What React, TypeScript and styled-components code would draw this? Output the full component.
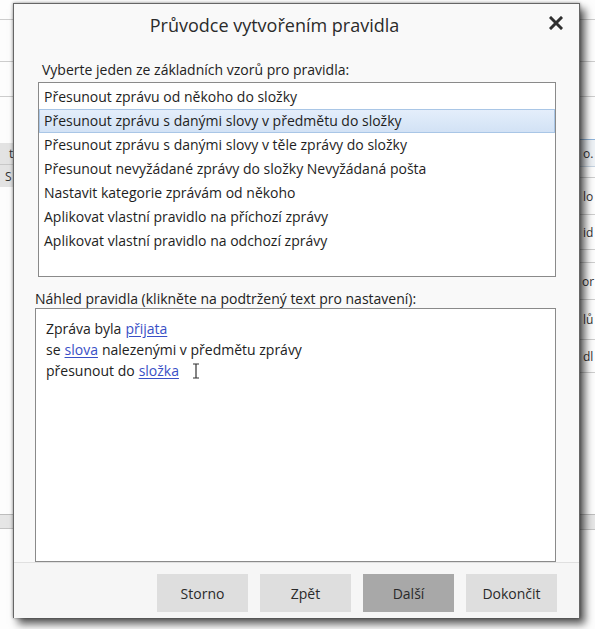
import styled, { createGlobalStyle } from 'styled-components'

const GlobalStyle = createGlobalStyle`
  html, body {
    margin: 0;
    padding: 0;
    background: #ffffff;
  }
  body {
    font-family: "Open Sans", "Noto Sans", "Liberation Sans", sans-serif;
    color: #222;
  }
`

const Page = styled.div`
  position: relative;
  width: 595px;
  height: 629px;
  overflow: hidden;
  background: #fdfdfd;
`

/* the Outlook window that sits behind the wizard */
const Backdrop = styled.div`
  display: flex;
  justify-content: space-between;
  height: 100%;
`

const Edge = styled.div`
  display: flex;
  flex-direction: column;
  width: 45px;
`

const BgRow = styled.div<{ $h: number; $line?: string; $fill?: string; $pad?: number }>`
  flex: none;
  height: ${p => p.$h}px;
  box-sizing: border-box;
  display: flex;
  align-items: center;
  padding-left: ${p => p.$pad ?? 0}px;
  background: ${p => p.$fill ?? 'transparent'};
  border-bottom: ${p => (p.$line ? `1px solid ${p.$line}` : 'none')};
  font-size: 12px;
  color: #333;
  white-space: nowrap;
`

const Dialog = styled.div`
  position: absolute;
  top: 3px;
  left: 13px;
  width: 567px;
  height: 615px;
  box-sizing: border-box;
  display: flex;
  flex-direction: column;
  background: #f9f9f9;
  border: 1px solid #666;
  box-shadow: 0 0 3px rgba(0, 0, 0, 0.4), 5px 6px 8px rgba(0, 0, 0, 0.65);
`

const Header = styled.div`
  position: relative;
  height: 42px;
  display: flex;
  align-items: center;
  justify-content: center;
  padding-right: 44px;
  flex: none;
`

const Title = styled.h1`
  margin: 0;
  font-size: 18px;
  font-weight: 400;
  color: #2b2b2b;
`

const Close = styled.button`
  position: absolute;
  right: 15px;
  top: 11px;
  width: 16px;
  height: 16px;
  padding: 0;
  border: 0;
  background: none;
  display: flex;
  align-items: center;
  justify-content: center;
`

const Body = styled.div`
  flex: 1;
  display: flex;
  flex-direction: column;
  padding: 0 23px 0 21px;
`

const Label = styled.div<{ $top: number; $indent?: number }>`
  margin-top: ${p => p.$top}px;
  padding-left: ${p => p.$indent ?? 0}px;
  height: 20px;
  line-height: 20px;
  font-size: 14px;
  color: #222;
  white-space: nowrap;
`

const List = styled.ul`
  list-style: none;
  margin: 2px 0 0 3px;
  padding: 2px 0 0;
  height: 195px;
  box-sizing: border-box;
  background: #fff;
  border: 1px solid #8a8a8a;
`

const Item = styled.li<{ $selected?: boolean }>`
  height: 24px;
  box-sizing: border-box;
  line-height: 22px;
  padding-left: 4px;
  font-size: 14px;
  color: #1e1e1e;
  white-space: nowrap;
  border: 1px solid ${p => (p.$selected ? '#a9c6e6' : 'transparent')};
  background: ${p => (p.$selected ? 'linear-gradient(#e4eefb, #d2e2f5)' : 'transparent')};
`

const Preview = styled.div`
  margin-top: -1px;
  height: 254px;
  box-sizing: border-box;
  background: #fff;
  border: 1px solid #8a8a8a;
  padding: 9px 10px;
  font-size: 14px;
  line-height: 21px;
  color: #222;
`

const Line = styled.div`
  white-space: nowrap;
  display: flex;
  align-items: center;
  gap: 4px;
`

const Link = styled.a`
  color: #3950c6;
  text-decoration: underline;
  text-underline-offset: 2px;
`

const Caret = styled.svg`
  margin-left: 9px;
`

const Footer = styled.div`
  flex: none;
  height: 56px;
  box-sizing: border-box;
  border-top: 1px solid #e0e0e0;
  background: #f6f6f6;
  display: flex;
  justify-content: flex-end;
  align-items: flex-start;
  gap: 12px;
  padding: 11px 22px 0 0;
`

const Button = styled.button<{ $active?: boolean }>`
  width: 91px;
  height: 38px;
  border: 0;
  padding: 0;
  font-family: inherit;
  font-size: 14px;
  color: #2a2a2a;
  background: ${p => (p.$active ? '#a8a8a8' : '#dedede')};
`

const templates = [
  'Přesunout zprávu od někoho do složky',
  'Přesunout zprávu s danými slovy v předmětu do složky',
  'Přesunout zprávu s danými slovy v těle zprávy do složky',
  'Přesunout nevyžádané zprávy do složky Nevyžádaná pošta',
  'Nastavit kategorie zprávám od někoho',
  'Aplikovat vlastní pravidlo na příchozí zprávy',
  'Aplikovat vlastní pravidlo na odchozí zprávy',
]

type Row = { h: number; line?: string; fill?: string; text?: string; pad?: number }

const leftRows: Row[] = [
  { h: 20, line: '#cdcdcd' },
  { h: 42, line: '#cdcdcd' },
  { h: 35, line: '#cdcdcd' },
  { h: 46 },
  { h: 22, fill: '#e3e3e3', line: '#c8c8c8', text: 't', pad: 9 },
  { h: 22, fill: '#e3e3e3', text: 'S', pad: 5 },
  { h: 328, line: '#bdbdbd' },
  { h: 14, fill: '#e6e6e6', line: '#c4c4c4' },
]

const rightRows: Row[] = [
  { h: 20, line: '#cdcdcd' },
  { h: 42, line: '#cdcdcd' },
  { h: 35, line: '#cdcdcd' },
  { h: 43, line: '#8fb4da' },
  { h: 27, fill: '#eef2f6', line: '#c5d3e1', text: 'o.', pad: 33 },
  { h: 11, line: '#cdcdcd' },
  { h: 37, line: '#cdcdcd', text: 'lo', pad: 33 },
  { h: 35, line: '#cdcdcd', text: 'id', pad: 33 },
  { h: 13, line: '#cdcdcd' },
  { h: 37, line: '#cdcdcd', text: 'or', pad: 32 },
  { h: 40, line: '#cdcdcd', text: 'lů', pad: 33 },
  { h: 33, line: '#cdcdcd', text: 'dl', pad: 33 },
  { h: 142, line: '#bdbdbd' },
  { h: 15, fill: '#e6e6e6', line: '#c4c4c4' },
]

const renderRows = (rows: Row[]) =>
  rows.map((r, i) => (
    <BgRow key={i} $h={r.h} $line={r.line} $fill={r.fill} $pad={r.pad}>
      {r.text}
    </BgRow>
  ))

export default function App() {
  return (
    <Page>
      <GlobalStyle />
      <Backdrop>
        <Edge>{renderRows(leftRows)}</Edge>
        <Edge>{renderRows(rightRows)}</Edge>
      </Backdrop>

      <Dialog>
        <Header>
          <Title>Průvodce vytvořením pravidla</Title>
          <Close aria-label="Zavřít">
            <svg width="14" height="14" viewBox="0 0 14 14">
              <path d="M2 2 L12 12 M12 2 L2 12" stroke="#2f2f2f" strokeWidth="3" strokeLinecap="square" />
            </svg>
          </Close>
        </Header>

        <Body>
          <Label $top={14} $indent={7}>Vyberte jeden ze základních vzorů pro pravidla:</Label>
          <List>
            {templates.map((t, i) => (
              <Item key={t} $selected={i === 1}>
                {t}
              </Item>
            ))}
          </List>

          <Label $top={12}>Náhled pravidla (klikněte na podtržený text pro nastavení):</Label>
          <Preview>
            <Line>
              Zpráva byla <Link>přijata</Link>
            </Line>
            <Line>
              se <Link>slova</Link> nalezenými v předmětu zprávy
            </Line>
            <Line>
              přesunout do <Link>složka</Link>
              <Caret width="8" height="16" viewBox="0 0 8 16">
                <path d="M1 1 H7 M4 1 V15 M1 15 H7" stroke="#333" strokeWidth="1.2" fill="none" />
              </Caret>
            </Line>
          </Preview>
        </Body>

        <Footer>
          <Button>Storno</Button>
          <Button>Zpět</Button>
          <Button $active>Další</Button>
          <Button>Dokončit</Button>
        </Footer>
      </Dialog>
    </Page>
  )
}
